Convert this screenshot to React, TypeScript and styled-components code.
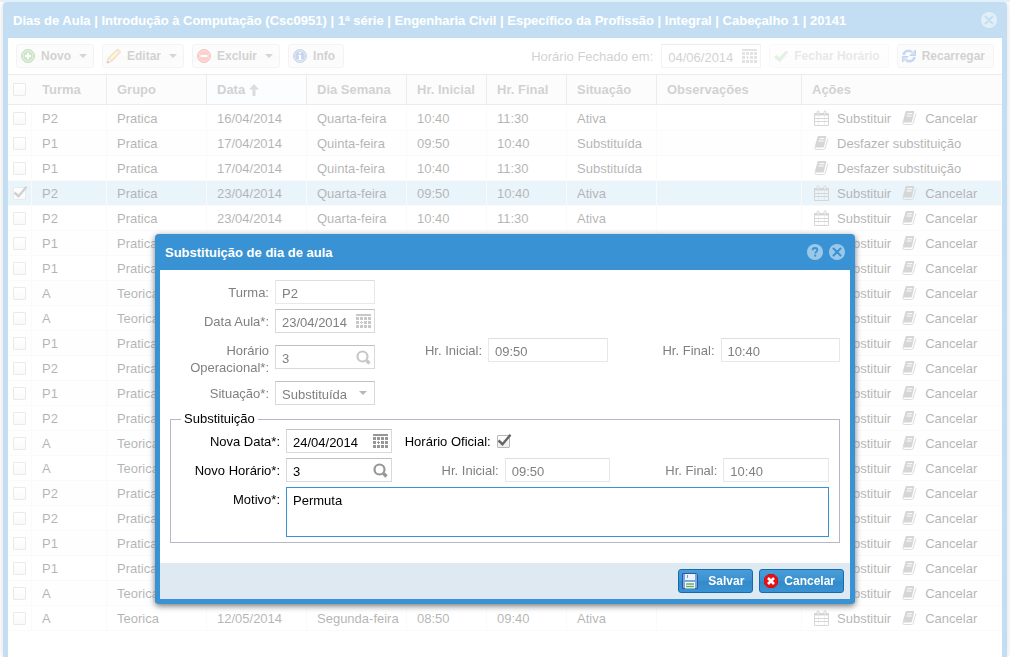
import React from "react";
import styled, { createGlobalStyle, css } from "styled-components";

const BLUE = "#3892d3";

const GlobalStyle = createGlobalStyle`
  * { box-sizing: border-box; }
  body {
    margin: 0;
    background: #fff;
    font: 13px/17px "Liberation Sans", Arial, sans-serif;
    color: #000;
  }
  button, input, select, textarea { font: inherit; margin: 0; }
  svg { display: block; flex: none; }
`;

/* ---------- window chrome ---------- */

const Desktop = styled.div`
  min-height: 100vh;
  padding: 0 3px;
  border-top: 2px solid #9fcbee;
  overflow: hidden;
`;

const MainWindow = styled.section`
  min-height: calc(100vh - 2px);
  border: solid ${BLUE};
  border-width: 0 5px;
  border-radius: 4px 4px 0 0;
  background: #fff;
  box-shadow: 0 0 6px #888;
`;

const TitleBar = styled.header`
  display: flex;
  align-items: center;
  gap: 6px;
  height: 36px;
  padding: 0 5px;
  background: ${BLUE};
  color: #fff;
`;

const Title = styled.h1`
  flex: 1;
  margin: 0;
  font-size: 13px;
  font-weight: bold;
  white-space: nowrap;
`;

const ToolButton = styled.button`
  width: 16px;
  height: 16px;
  padding: 0;
  border: 0;
  background: none;
`;

const Mask = styled.div`
  position: fixed;
  inset: 0;
  display: flex;
  justify-content: center;
  align-items: flex-start;
  padding-top: 234px;
  background: rgba(255, 255, 255, 0.7);
`;

/* ---------- toolbar ---------- */

const Toolbar = styled.div`
  display: flex;
  align-items: center;
  gap: 8px;
  height: 36px;
  padding: 0 8px;
`;

const Spacer = styled.div`
  flex: 1;
`;

const ToolbarButton = styled.button<{ $menu?: boolean }>`
  display: flex;
  align-items: center;
  gap: 5px;
  height: 24px;
  padding: 0 ${(p) => (p.$menu ? 6 : 8)}px 0 3px;
  border: 1px solid #d8d8d8;
  border-radius: 3px;
  background: linear-gradient(#f6f6f6, #f6f6f6 50%, #efefef 50%, #f5f5f5);
  color: #666;
  font-size: 12px;
  font-weight: bold;
  white-space: nowrap;
  &:disabled { opacity: 0.5; }
`;

const MenuArrow = styled.svg`
  margin-left: 3px;
`;

const ToolbarLabel = styled.label`
  color: #666;
`;

/* ---------- grid ---------- */

const Grid = styled.table`
  width: 100%;
  table-layout: fixed;
  border-collapse: separate;
  border-spacing: 0;
`;

const HeadCell = styled.th<{ $sorted?: boolean; $plain?: boolean }>`
  height: 31px;
  padding: 0 10px;
  border: solid #c0c0c0;
  border-width: 1px ${(p) => (p.$plain ? 0 : 1)}px 1px 0;
  background: ${(p) => (p.$sorted ? "#f2f8fd" : "#f5f5f5")};
  color: #666;
  text-align: left;
  white-space: nowrap;
`;

const HeadLabel = styled.span`
  display: flex;
  align-items: center;
  gap: 4px;
`;

const Row = styled.tr<{ $selected?: boolean }>`
  td { background: ${(p) => (p.$selected ? "#b8d9f2" : "#fff")}; }
  &:nth-child(even) td { background: ${(p) => (p.$selected ? "#b8d9f2" : "#fafafa")}; }
  &:first-child td { height: 26px; border-top: 1px solid #fff; }
`;

const Cell = styled.td`
  height: 25px;
  padding: 0 10px;
  border-right: 1px solid #ededed;
  border-bottom: 1px solid #ededed;
  white-space: nowrap;
  overflow: hidden;
`;

const CheckCell = styled(Cell)`
  padding: 0 0 0 5px;
`;

const CheckHead = styled(HeadCell)`
  padding: 0 0 0 5px;
`;

const ActionsCell = styled(Cell)`
  padding: 0 0 0 12px;
`;

const Actions = styled.div`
  display: flex;
  gap: 11px;
`;

const Action = styled.a`
  display: flex;
  align-items: center;
  gap: 7px;
  color: inherit;
  text-decoration: none;
`;

/* ---------- checkbox ---------- */

const CheckWrap = styled.span`
  position: relative;
  display: block;
  width: 13px;
  height: 13px;
  svg { position: absolute; left: 0; top: -1px; pointer-events: none; }
`;

const CheckInput = styled.input`
  appearance: none;
  display: block;
  width: 13px;
  height: 13px;
  border: 1px solid #b8b8b8;
  border-radius: 1px;
  background: linear-gradient(#fff, #eee);
`;

/* ---------- dialog ---------- */

const Dialog = styled.section`
  width: 700px;
  max-width: 100%;
  border: 5px solid ${BLUE};
  border-top: 0;
  border-radius: 4px;
  background: #fff;
  box-shadow: 0 2px 6px #777;
`;

const DialogBody = styled.form`
  display: flex;
  flex-direction: column;
  gap: 5px;
  padding: 10px 10px 20px;
`;

const FormRow = styled.div`
  display: flex;
  align-items: flex-start;
  gap: 8px;
`;

const Field = styled.div<{ $fixed?: boolean; $center?: boolean; $muted?: boolean }>`
  display: flex;
  align-items: ${(p) => (p.$center ? "center" : "flex-start")};
  gap: 5px;
  min-width: 0;
  flex: ${(p) => (p.$fixed ? "0 0 205px" : "1 1 0")};
  color: ${(p) => (p.$muted ? "#808080" : "#000")};
`;

const FieldLabel = styled.label<{ $narrow?: boolean }>`
  flex: 0 0 ${(p) => (p.$narrow ? 92 : 100)}px;
  padding: 4px 1px 0 0;
  text-align: right;
`;

const inputBorder = css<{ $faint?: boolean }>`
  border: 1px solid ${(p) => (p.$faint ? "#e8e8e8" : "#d9d9d9")};
  border-top-color: ${(p) => (p.$faint ? "#dedede" : "#c0c0c0")};
`;

const InputBox = styled.div<{ $faint?: boolean; $toolbar?: boolean }>`
  ${inputBorder}
  display: flex;
  align-items: center;
  flex: ${(p) => (p.$toolbar ? "0 0 100px" : "1 1 0")};
  min-width: 0;
  height: 24px;
  padding-right: 3px;
  background: #fff;
  color: ${(p) => (p.$toolbar ? "#666" : "inherit")};
`;

const TextInput = styled.input`
  flex: 1;
  min-width: 0;
  height: 22px;
  padding: 2px 0 0 6px;
  border: 0;
  outline: 0;
  background: none;
  color: inherit;
`;

const SelectInput = styled.select`
  appearance: none;
  flex: 1;
  min-width: 0;
  height: 22px;
  padding: 2px 0 0 6px;
  border: 0;
  background: none;
  color: inherit;
`;

const Trigger = styled.button`
  padding: 0;
  border: 0;
  background: none;
`;

const SelectArrow = styled.svg`
  margin-right: 4px;
`;

const FieldSet = styled.fieldset`
  min-width: 0;
  margin: 0;
  padding: 1px 10px 5px;
  border: 1px solid #b5b8c8;
`;

const Legend = styled.legend`
  padding: 0 3px;
  line-height: 18px;
`;

const FieldStack = styled.div`
  display: flex;
  flex-direction: column;
  gap: 5px;
`;

const NoteArea = styled.textarea`
  flex: 1;
  min-width: 0;
  height: 50px;
  padding: 4px 6px;
  border: 1px solid ${BLUE};
  outline: 0;
  resize: none;
`;

const CheckSlot = styled.span`
  padding-top: 6px;
`;

const DialogFooter = styled.footer`
  display: flex;
  justify-content: flex-end;
  gap: 6px;
  padding: 6px;
  background: #dfe9f2;
`;

const PrimaryButton = styled.button<{ $gap: number }>`
  display: flex;
  align-items: center;
  gap: ${(p) => p.$gap}px;
  height: 24px;
  padding: 0 8px 0 3px;
  border: 1px solid #126daf;
  border-radius: 3px;
  background: linear-gradient(#4b9cd7, #3892d3 50%, #358ac8 50%, #3892d3);
  color: #fff;
  font-size: 12px;
  font-weight: bold;
`;

/* ---------- icons ---------- */

const Arrow = <path d="M0 0h8L4 4z" fill="currentColor" />;

const DownArrow = () => (
  <MenuArrow width="8" height="4" viewBox="0 0 8 4" opacity="0.9">{Arrow}</MenuArrow>
);

const CloseIcon = () => (
  <svg width="16" height="16" viewBox="0 0 16 16">
    <circle cx="8" cy="8" r="8" fill="#9bc8e9" />
    <path d="M4.5 4.5l7 7M11.5 4.5l-7 7" stroke={BLUE} strokeWidth="2" strokeLinecap="round" />
  </svg>
);

const HelpIcon = () => (
  <svg width="16" height="16" viewBox="0 0 16 16" fill="none">
    <circle cx="8" cy="8" r="8" fill="#9bc8e9" />
    <path d="M5.6 6.2C5.7 4.7 6.7 4 8 4c1.400 0 2.400.8 2.400 2 0 1.700-2.200 1.700-2.200 3.400" stroke={BLUE} strokeWidth="1.800" />
    <path d="M7.200 10.600h2v2h-2z" fill={BLUE} />
  </svg>
);

const AddIcon = () => (
  <svg width="16" height="16" viewBox="0 0 16 16">
    <circle cx="8" cy="8" r="6.500" fill="#5db04e" stroke="#3c8b34" />
    <circle cx="8" cy="8" r="5.300" fill="none" stroke="#a5d89b" />
    <path d="M8 5v6M5 8h6" stroke="#fff" strokeWidth="2" />
  </svg>
);

const RemoveIcon = () => (
  <svg width="16" height="16" viewBox="0 0 16 16">
    <circle cx="8" cy="8" r="6.500" fill="#ee5748" stroke="#d3392f" />
    <circle cx="8" cy="8" r="5.300" fill="none" stroke="#f59a8e" />
    <path d="M4.500 8h7" stroke="#fff" strokeWidth="2.400" />
  </svg>
);

const InfoIcon = () => (
  <svg width="16" height="16" viewBox="0 0 16 16">
    <circle cx="8" cy="8" r="6.500" fill="#4878be" stroke="#4f74b0" />
    <circle cx="8" cy="8" r="5.400" fill="none" stroke="#a9c1e4" />
    <path d="M7 4h2v1.600H7zM6.500 7H9v4h.8v1H6.300v-1H7V8h-.5z" fill="#fff" />
  </svg>
);

const PencilIcon = () => (
  <svg width="16" height="16" viewBox="0 0 16 16">
    <path d="M1 15l1.500-5L11 1.500c1-1 4 1.600 3 3L6 13z" fill="#f6c04c" stroke="#b77a1c" />
    <path d="M4 11.500l8-8" stroke="#fde8a8" strokeWidth="1.500" />
    <path d="M1 15l1.500-5c1.500 0 3 1.500 3.500 3z" fill="#f5dcb9" stroke="#b99a74" />
    <path d="M1 15l.8-2.200 1.500 1.400z" fill="#333" />
    <path d="M10.500 2.500L12 1.300c1-.5 3.300 1.600 2.600 2.900l-1.300 1.400z" fill="#e9a5a0" />
  </svg>
);

const TickIcon = () => (
  <svg width="16" height="16" viewBox="0 0 16 16">
    <path d="M1.500 9.200l2-2 2.900 2.700L13 3l2 1-8.300 10z" fill="#3fa34a" stroke="#58b058" strokeLinejoin="round" />
  </svg>
);

const RefreshIcon = () => (
  <svg width="16" height="16" viewBox="0 0 16 16" fill="none">
    <path d="M2.500 7C3 3.500 7.500 1.200 11 4" stroke="#3f84d4" strokeWidth="2.600" />
    <path d="M14.500 2v5.500H9z" fill="#6aa5e6" stroke="#2f6fbd" strokeLinejoin="round" />
    <path d="M13.500 9c-.5 3.500-5 5.800-8.500 3" stroke="#3f84d4" strokeWidth="2.600" />
    <path d="M1.500 14V8.500H7z" fill="#6aa5e6" stroke="#2f6fbd" strokeLinejoin="round" />
  </svg>
);

const SortIcon = () => (
  <svg width="10" height="12" viewBox="0 0 10 12">
    <path d="M5 0l5 5.500H6.500V12h-3V5.500H0z" fill="#8b8b8b" />
  </svg>
);

const DateIcon = ({ color }: { color: string }) => (
  <svg width="15" height="14" viewBox="0 0 15 14" fill={color} shapeRendering="crispEdges">
    <path d="M0 0h15v2H0z" />
    {[3, 7, 11].map((y) =>
      [0, 4, 8, 12].map((x) =>
        x === 4 && y === 7 ? (
          <path key="mark" d="M5 7h1v1h1v1H6v1H5V9H4V8h1z" />
        ) : (
          <rect key={`${x}-${y}`} x={x} y={y} width="3" height="3" />
        )
      )
    )}
  </svg>
);

const SearchIcon = ({ color }: { color: string }) => (
  <svg width="15" height="15" viewBox="0 0 15 15" fill="none" stroke={color}>
    <circle cx="6.500" cy="6.500" r="5" strokeWidth="2.200" />
    <path d="M10.500 10.500l3 3" strokeWidth="3.400" />
  </svg>
);

const CalendarIcon = () => (
  <svg width="16" height="16" viewBox="0 0 16 16" fill="none" stroke="#777">
    <path d="M.5 3.500h14v12H.5z" />
    <path d="M0 4.500h15" strokeWidth="2" />
    <path d="M1 8.500h13M1 11.500h13" />
    <path d="M4.500 6v9M10.500 6v9" strokeOpacity="0.35" />
    <path d="M3 4V1.500Q4 0 5 1.500V4M10 4V1.500Q11 0 12 1.500V4" fill="#fff" />
  </svg>
);

const BookIcon = () => (
  <svg width="16" height="16" viewBox="0 0 16 16">
    <path d="M4.500 1h7q1 0 .7 1L10 11.500q-.3 1-1.300 1H1.500q-1 0-.7-1L3.500 2q.2-1 1-1z" fill="#777" />
    <path d="M.7 12.500q0 2 1.500 2H9.500q1.200 0 1.600-1.200L14 3.500" fill="none" stroke="#8a8a8a" />
    <path d="M5.300 3.700h5M4.600 6h5" stroke="#fff" />
  </svg>
);

const SaveIcon = () => (
  <svg width="16" height="16" viewBox="0 0 16 16">
    <path d="M.5.500h14l1 1v14H.500z" fill="#7ba6e4" stroke="#30589f" />
    <path d="M3 1h10v6H3z" fill="#edf3fb" />
    <path d="M5.500 2v3" stroke="#7397c9" />
    <path d="M3 9h10v6.500H3z" fill="#fff" />
    <path d="M4 11h8M4 13.500h8" stroke="#61b34f" strokeWidth="1.600" />
  </svg>
);

const CancelIcon = () => (
  <svg width="16" height="16" viewBox="0 0 16 16">
    <path d="M5 1.500h6L14.500 5v6L11 14.500H5L1.500 11V5z" fill="#e60f14" stroke="#c8151b" strokeLinejoin="round" />
    <path d="M5 5l6 6M11 5l-6 6" stroke="#fff" strokeWidth="2.600" />
  </svg>
);

/* ---------- composed parts ---------- */

const CheckBox = ({ id, checked, label }: { id?: string; checked?: boolean; label?: string }) => (
  <CheckWrap>
    <CheckInput id={id} type="checkbox" defaultChecked={checked} aria-label={label} />
    {checked && (
      <svg width="15" height="13" viewBox="0 0 15 13">
        <path d="M1.500 6.500l4 3.700L13.500.8" fill="none" stroke="#666" strokeWidth="2.400" />
      </svg>
    )}
  </CheckWrap>
);

type BoxFieldProps = {
  id: string;
  label: string;
  value: string;
  fixed?: boolean;
  muted?: boolean;
  faint?: boolean;
  center?: boolean;
  trigger?: "date" | "search";
};

const BoxField = ({ id, label, value, fixed, muted, faint, center, trigger }: BoxFieldProps) => {
  const color = muted ? "#c8c8c8" : "#969696";
  return (
    <Field $fixed={fixed} $muted={muted} $center={center}>
      <FieldLabel htmlFor={id}>{label}</FieldLabel>
      <InputBox $faint={faint}>
        <TextInput id={id} defaultValue={value} readOnly={muted} />
        {trigger && (
          <Trigger type="button" aria-label={trigger === "date" ? "Abrir calendário" : "Pesquisar"}>
            {trigger === "date" ? <DateIcon color={color} /> : <SearchIcon color={color} />}
          </Trigger>
        )}
      </InputBox>
    </Field>
  );
};

/* ---------- data ---------- */

type Lesson = [turma: string, grupo: string, data: string, dia: string, inicio: string, fim: string, situacao: string];

const lessons: Lesson[] = [
  ["P2", "Pratica", "16/04/2014", "Quarta-feira", "10:40", "11:30", "Ativa"],
  ["P1", "Pratica", "17/04/2014", "Quinta-feira", "09:50", "10:40", "Substituída"],
  ["P1", "Pratica", "17/04/2014", "Quinta-feira", "10:40", "11:30", "Substituída"],
  ["P2", "Pratica", "23/04/2014", "Quarta-feira", "09:50", "10:40", "Ativa"],
  ["P2", "Pratica", "23/04/2014", "Quarta-feira", "10:40", "11:30", "Ativa"],
  ["P1", "Pratica", "24/04/2014", "Quinta-feira", "09:50", "10:40", "Ativa"],
  ["P1", "Pratica", "24/04/2014", "Quinta-feira", "10:40", "11:30", "Ativa"],
  ["A", "Teorica", "28/04/2014", "Segunda-feira", "08:00", "08:50", "Ativa"],
  ["A", "Teorica", "28/04/2014", "Segunda-feira", "08:50", "09:40", "Ativa"],
  ["P1", "Pratica", "29/04/2014", "Terça-feira", "09:50", "10:40", "Ativa"],
  ["P2", "Pratica", "30/04/2014", "Quarta-feira", "09:50", "10:40", "Ativa"],
  ["P1", "Pratica", "30/04/2014", "Quarta-feira", "10:40", "11:30", "Ativa"],
  ["P2", "Pratica", "30/04/2014", "Quarta-feira", "10:40", "11:30", "Ativa"],
  ["A", "Teorica", "05/05/2014", "Segunda-feira", "08:00", "08:50", "Ativa"],
  ["A", "Teorica", "05/05/2014", "Segunda-feira", "08:50", "09:40", "Ativa"],
  ["P2", "Pratica", "07/05/2014", "Quarta-feira", "09:50", "10:40", "Ativa"],
  ["P2", "Pratica", "07/05/2014", "Quarta-feira", "10:40", "11:30", "Ativa"],
  ["P1", "Pratica", "08/05/2014", "Quinta-feira", "09:50", "10:40", "Ativa"],
  ["P1", "Pratica", "08/05/2014", "Quinta-feira", "10:40", "11:30", "Ativa"],
  ["A", "Teorica", "12/05/2014", "Segunda-feira", "08:00", "08:50", "Ativa"],
  ["A", "Teorica", "12/05/2014", "Segunda-feira", "08:50", "09:40", "Ativa"],
];

const SELECTED = 3;

const LessonGrid = () => (
  <Grid>
    <colgroup>
      {[24, 75, 100, 100, 100, 80, 80, 90, 145].map((w, i) => (
        <col key={i} width={w} />
      ))}
      <col />
    </colgroup>
    <thead>
      <tr>
        <CheckHead $plain><CheckBox label="Selecionar todos" /></CheckHead>
        <HeadCell>Turma</HeadCell>
        <HeadCell>Grupo</HeadCell>
        <HeadCell $sorted><HeadLabel>Data <SortIcon /></HeadLabel></HeadCell>
        <HeadCell>Dia Semana</HeadCell>
        <HeadCell>Hr. Inicial</HeadCell>
        <HeadCell>Hr. Final</HeadCell>
        <HeadCell>Situação</HeadCell>
        <HeadCell>Observações</HeadCell>
        <HeadCell $plain>Ações</HeadCell>
      </tr>
    </thead>
    <tbody>
      {lessons.map((lesson, i) => (
        <Row key={i} $selected={i === SELECTED}>
          <CheckCell><CheckBox checked={i === SELECTED} label={`Selecionar aula ${i + 1}`} /></CheckCell>
          {lesson.map((text, c) => <Cell key={c}>{text}</Cell>)}
          <Cell />
          <ActionsCell>
            <Actions>
              {lesson[6] === "Substituída" ? (
                <Action href="#desfazer"><BookIcon />Desfazer substituição</Action>
              ) : (
                <>
                  <Action href="#substituir"><CalendarIcon />Substituir</Action>
                  <Action href="#cancelar"><BookIcon />Cancelar</Action>
                </>
              )}
            </Actions>
          </ActionsCell>
        </Row>
      ))}
    </tbody>
  </Grid>
);

const SubstitutionDialog = () => (
  <Dialog role="dialog" aria-label="Substituição de dia de aula">
    <TitleBar>
      <Title as="h2">Substituição de dia de aula</Title>
      <ToolButton aria-label="Ajuda"><HelpIcon /></ToolButton>
      <ToolButton aria-label="Fechar"><CloseIcon /></ToolButton>
    </TitleBar>
    <DialogBody>
      <FormRow><BoxField id="turma" label="Turma:" value="P2" fixed muted faint /></FormRow>
      <FormRow><BoxField id="data" label="Data Aula*:" value="23/04/2014" fixed muted trigger="date" /></FormRow>
      <FormRow>
        <BoxField id="horario" label="Horário Operacional*:" value="3" fixed muted center trigger="search" />
        <BoxField id="inicial" label="Hr. Inicial:" value="09:50" muted faint />
        <BoxField id="final" label="Hr. Final:" value="10:40" muted faint />
      </FormRow>
      <FormRow>
        <Field $fixed $muted>
          <FieldLabel htmlFor="situacao">Situação*:</FieldLabel>
          <InputBox>
            <SelectInput id="situacao" defaultValue="Substituída">
              <option>Substituída</option>
            </SelectInput>
            <SelectArrow width="8" height="4" viewBox="0 0 8 4" color="#b8b8b8">{Arrow}</SelectArrow>
          </InputBox>
        </Field>
      </FormRow>
      <FieldSet>
        <Legend>Substituição</Legend>
        <FieldStack>
          <FormRow>
            <BoxField id="novaData" label="Nova Data*:" value="24/04/2014" trigger="date" />
            <Field>
              <FieldLabel $narrow htmlFor="oficial">Horário Oficial:</FieldLabel>
              <CheckSlot><CheckBox id="oficial" checked /></CheckSlot>
            </Field>
            <Field />
          </FormRow>
          <FormRow>
            <BoxField id="novoHorario" label="Novo Horário*:" value="3" trigger="search" />
            <BoxField id="novoInicial" label="Hr. Inicial:" value="09:50" muted faint />
            <BoxField id="novoFinal" label="Hr. Final:" value="10:40" muted faint />
          </FormRow>
          <Field>
            <FieldLabel htmlFor="motivo">Motivo*:</FieldLabel>
            <NoteArea id="motivo" defaultValue="Permuta" />
          </Field>
        </FieldStack>
      </FieldSet>
    </DialogBody>
    <DialogFooter>
      <PrimaryButton type="button" $gap={10}><SaveIcon />Salvar</PrimaryButton>
      <PrimaryButton type="button" $gap={5}><CancelIcon />Cancelar</PrimaryButton>
    </DialogFooter>
  </Dialog>
);

export default function App() {
  return (
    <>
      <GlobalStyle />
      <Desktop>
        <MainWindow>
          <TitleBar>
            <Title>
              Dias de Aula | Introdução à Computação (Csc0951) | 1ª série | Engenharia Civil | Específico da Profissão | Integral | Cabeçalho 1 | 20141
            </Title>
            <ToolButton aria-label="Fechar janela"><CloseIcon /></ToolButton>
          </TitleBar>
          <Toolbar>
            <ToolbarButton $menu><AddIcon />Novo<DownArrow /></ToolbarButton>
            <ToolbarButton $menu><PencilIcon />Editar<DownArrow /></ToolbarButton>
            <ToolbarButton $menu><RemoveIcon />Excluir<DownArrow /></ToolbarButton>
            <ToolbarButton><InfoIcon />Info</ToolbarButton>
            <Spacer />
            <ToolbarLabel htmlFor="fechado">Horário Fechado em:</ToolbarLabel>
            <InputBox $toolbar>
              <TextInput id="fechado" defaultValue="04/06/2014" />
              <Trigger aria-label="Abrir calendário"><DateIcon color="#a0a0a0" /></Trigger>
            </InputBox>
            <ToolbarButton disabled><TickIcon />Fechar Horário</ToolbarButton>
            <ToolbarButton><RefreshIcon />Recarregar</ToolbarButton>
          </Toolbar>
          <LessonGrid />
        </MainWindow>
      </Desktop>
      <Mask>
        <SubstitutionDialog />
      </Mask>
    </>
  );
}
